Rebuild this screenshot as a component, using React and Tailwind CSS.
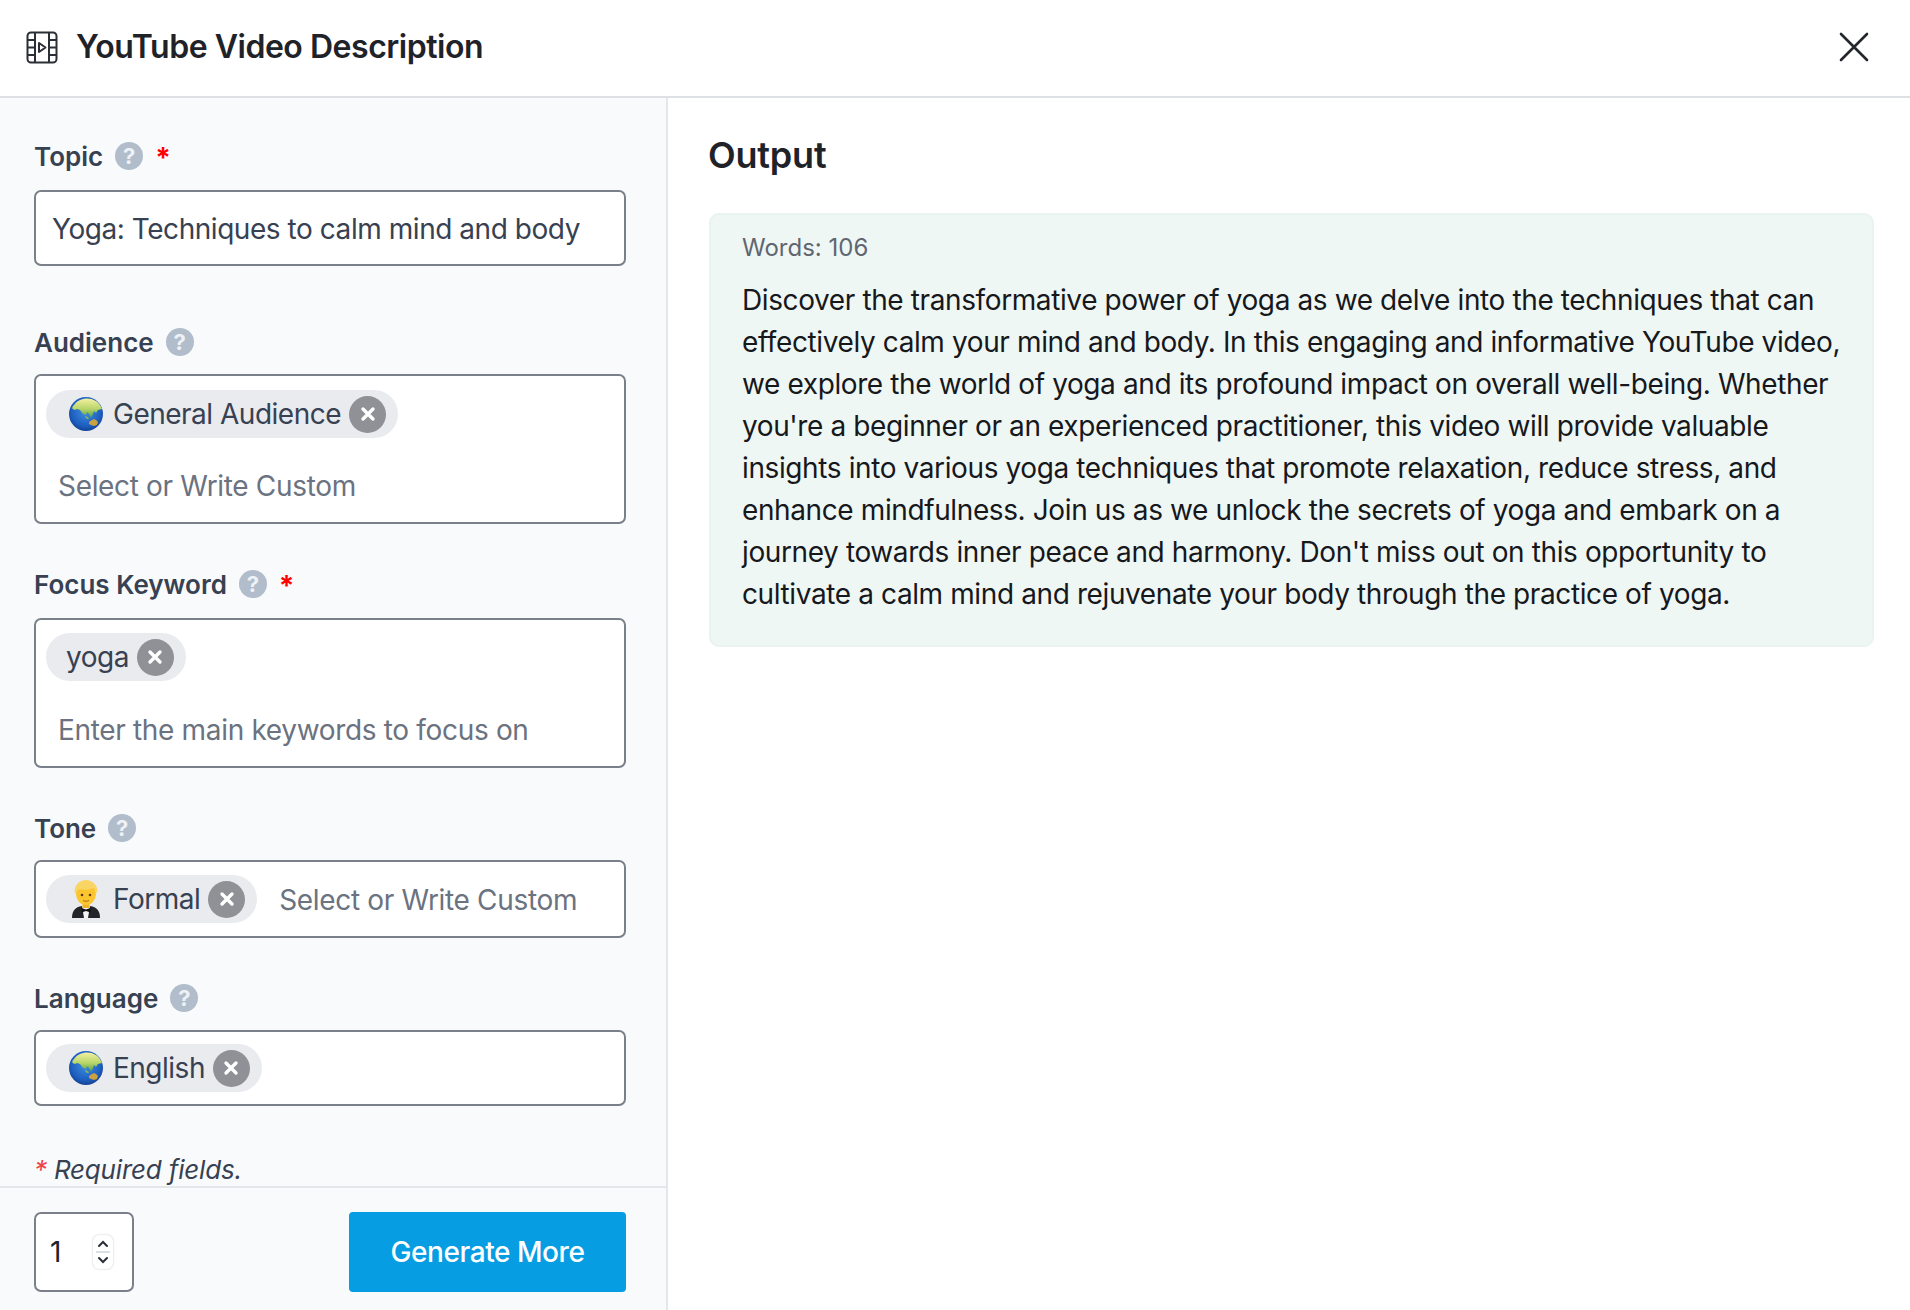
import { Fragment } from 'react';

const GLOBE_ID = { sea: 'globe-sea', land: 'globe-land' };

function Globe() {
  return (
    <svg width="36" height="36" viewBox="0 0 36 36" className="shrink-0">
      <defs>
        <radialGradient id={GLOBE_ID.sea} cx="0.5" cy="0.42" r="0.62">
          <stop offset="0" stopColor="#3f8ee0" />
          <stop offset="0.7" stopColor="#1d5fc0" />
          <stop offset="1" stopColor="#123a88" />
        </radialGradient>
        <linearGradient id={GLOBE_ID.land} x1="0" y1="0" x2="0" y2="1">
          <stop offset="0" stopColor="#f5f0a0" />
          <stop offset="0.55" stopColor="#b5d468" />
          <stop offset="1" stopColor="#4f9a45" />
        </linearGradient>
      </defs>
      <circle cx="18" cy="18" r="17" fill={`url(#${GLOBE_ID.sea})`} />
      <path d="M6 9C10 3 20 0 28 5c3 2 5 5 6 8l-4 1-2 3-2-2-1 3-2 4-2-4-2-2-1 3-3-1-3-4-3-1-2 1C3 13 4 11 6 9z" fill={`url(#${GLOBE_ID.land})`} />
      <path d="M21 26l3-2 2-1 2 1 2 2-1 3-3 1-3-1-2-1z" fill="#c9a23f" />
      <path d="M17 20l3 1 1 2-2 0-2-2z" fill="#7fb658" />
    </svg>
  );
}

function Butler() {
  return (
    <svg width="36" height="40" viewBox="0 0 36 40" className="shrink-0">
      <path d="M4 39c0-7 3-11 10-12h8c7 1 10 5 10 12z" fill="#23252b" />
      <path d="M14 27h8l-2 12h-4z" fill="#f4f4f4" />
      <path d="M13.5 29l4.5 1.5 4.5-1.5v4.5l-4.5-1.5-4.5 1.5z" fill="#111" />
      <rect x="14.5" y="22" width="7" height="7" fill="#f0b429" />
      <ellipse cx="18" cy="15" rx="10" ry="11" fill="#fbc52f" />
      <path d="M7 15C5 6 12 1 18 1s13 5 11 14c-1-3-2-5-4-6-3 2-10 2-14 1-1 1-3 3-4 5z" fill="#f9d565" />
      <circle cx="14" cy="16" r="1.3" fill="#5b3a12" />
      <circle cx="22" cy="16" r="1.3" fill="#5b3a12" />
      <path d="M15 21.5c2 1 4 1 6 0" stroke="#a5651a" strokeWidth="1" fill="none" />
    </svg>
  );
}

function HelpDot() {
  return (
    <span className="flex h-[28px] w-[28px] items-center justify-center rounded-full bg-[#b1bdcb] text-[22px] font-bold leading-none text-[#eef1f5]">
      ?
    </span>
  );
}

function Label({ text, required }) {
  return (
    <div className="flex h-[36px] items-center">
      <span className="text-[26px] font-semibold text-[#374151]">{text}</span>
      <span className="ml-[12px]"><HelpDot /></span>
      {required && <span className="ml-[12px] mt-[4px] text-[28px] font-bold leading-none text-[#ff0000]">*</span>}
    </div>
  );
}

function Chip({ icon, label }) {
  return (
    <span className="inline-flex h-[48px] shrink-0 items-center rounded-full bg-[#e9ebef] pl-[20px] pr-[12px]">
      {icon && <span className="mr-[9px] ml-[2px]">{icon}</span>}
      <span className="text-[28px] leading-none tracking-[-0.5px] text-[#374151]">{label}</span>
      <span className="ml-[8px] flex h-[37px] w-[37px] items-center justify-center rounded-full bg-[#8f9196]">
        <svg width="18" height="18" viewBox="0 0 18 18">
          <path d="M4 4l10 10M14 4L4 14" stroke="#fff" strokeWidth="3.4" strokeLinecap="round" />
        </svg>
      </span>
    </span>
  );
}

const boxClass = 'w-[592px] rounded-[7px] border-2 border-[#7a808a] bg-white';

export default function App() {
  const lines = [
    'Discover the transformative power of yoga as we delve into the techniques that can',
    'effectively calm your mind and body. In this engaging and informative YouTube video,',
    'we explore the world of yoga and its profound impact on overall well-being. Whether',
    "you're a beginner or an experienced practitioner, this video will provide valuable",
    'insights into various yoga techniques that promote relaxation, reduce stress, and',
    'enhance mindfulness. Join us as we unlock the secrets of yoga and embark on a',
    "journey towards inner peace and harmony. Don't miss out on this opportunity to",
    'cultivate a calm mind and rejuvenate your body through the practice of yoga.',
  ];

  return (
    <div className="flex h-[1310px] w-[1910px] flex-col overflow-hidden bg-white font-['Inter',sans-serif] text-[#1f2329]">
      <header className="flex h-[98px] shrink-0 items-center border-b-2 border-[#dde1e6] pb-[2px] pl-[26px] pr-[41px]">
        <svg width="32" height="33" viewBox="0 0 32 33" fill="none" stroke="#2b2f36" strokeWidth="2" className="shrink-0">
          <rect x="1.5" y="1.5" width="29" height="30" rx="3.5" />
          <path d="M9 1.5v30M23 1.5v30M1.5 9H9M1.5 16.5H9M1.5 24H9M23 9h7.5M23 16.5h7.5M23 24h7.5" />
          <path d="M13 12l6.5 4.5L13 21z" strokeLinejoin="round" />
        </svg>
        <h1 className="ml-[18px] text-[32px] font-semibold tracking-[-0.47px] text-[#1f2329]">YouTube Video Description</h1>
        <svg width="30" height="30" viewBox="0 0 30 30" className="ml-auto">
          <path d="M2 2l26 26M28 2L2 28" stroke="#23262b" strokeWidth="2.6" strokeLinecap="round" />
        </svg>
      </header>

      <div className="flex min-h-0 flex-1">
        <aside className="flex w-[668px] shrink-0 flex-col border-r-2 border-[#e3e7ec] bg-[#f8fafc]">
          <div className="min-h-0 flex-1 overflow-hidden px-[34px] pt-[40px]">
            <Label text="Topic" required />
            <input
              readOnly
              value="Yoga: Techniques to calm mind and body"
              className={`${boxClass} mt-[16px] block h-[76px] px-[16px] pt-[2px] text-[28px] tracking-[-0.45px] text-[#374151] outline-none`}
            />

            <div className="mt-[58px]"><Label text="Audience" /></div>
            <div className={`${boxClass} mt-[14px] h-[150px] pl-[10px] pt-[14px]`}>
              <Chip icon={<Globe />} label="General Audience" />
              <input readOnly placeholder="Select or Write Custom" className="mt-[27px] block w-[540px] pl-[12px] text-[28px] tracking-[-0.33px] outline-none placeholder:text-[#6b7280]" />
            </div>

            <div className="mt-[42px]"><Label text="Focus Keyword" required /></div>
            <div className={`${boxClass} mt-[16px] h-[150px] pl-[10px] pt-[13px]`}>
              <Chip label="yoga" />
              <input readOnly placeholder="Enter the main keywords to focus on" className="mt-[28px] block w-[540px] pl-[12px] text-[28px] tracking-[-0.33px] outline-none placeholder:text-[#6b7280]" />
            </div>

            <div className="mt-[42px]"><Label text="Tone" /></div>
            <div className={`${boxClass} mt-[14px] flex h-[78px] items-center pl-[10px]`}>
              <Chip icon={<Butler />} label="Formal" />
              <input readOnly placeholder="Select or Write Custom" className="ml-[22px] mt-[2px] w-[320px] text-[28px] tracking-[-0.33px] outline-none placeholder:text-[#6b7280]" />
            </div>

            <div className="mt-[42px]"><Label text="Language" /></div>
            <div className={`${boxClass} mt-[14px] flex h-[76px] items-center pl-[10px]`}>
              <Chip icon={<Globe />} label="English" />
            </div>

            <p className="mt-[46px] text-[26px] italic leading-[36px] tracking-[-0.2px] text-[#374151]">
              <span className="text-[#ef4444]">*</span> Required fields.
            </p>
          </div>

          <div className="flex h-[124px] shrink-0 items-start justify-between border-t-2 border-[#e3e6ea] pl-[34px] pr-[40px] pt-[24px]">
            <div className="flex h-[80px] w-[100px] items-center rounded-[7px] border-2 border-[#7a808a] bg-white pl-[14px]">
              <span className="text-[28px] text-[#1f2329]">1</span>
              <span className="ml-[32px] flex h-[34px] w-[20px] flex-col items-center justify-center rounded-[6px] bg-white shadow-[0_0_2px_rgba(0,0,0,0.25)]">
                <svg width="14" height="34" viewBox="0 0 14 34" fill="none" stroke="#2b2f36" strokeWidth="2" strokeLinecap="round">
                  <path d="M3 11l4-4 4 4M3 23l4 4 4-4" />
                  <path d="M0 17h14" stroke="#dcdfe3" />
                </svg>
              </span>
            </div>
            <button className="h-[80px] w-[277px] rounded-[4px] bg-[#069de3] text-[28px] font-medium tracking-[-0.45px] text-white">
              Generate More
            </button>
          </div>
        </aside>

        <main className="min-w-0 flex-1 pl-[41px] pr-[36px] pt-[32px]">
          <h2 className="-ml-[1px] text-[36px] font-semibold leading-[50px] tracking-[-0.2px] text-[#1f2329]">Output</h2>
          <section className="mt-[33px] h-[434px] rounded-[10px] border-2 border-[#e9f3f0] bg-[#eff7f5] pl-[31px] pr-[20px] pt-[16px]">
            <div className="text-[24px] leading-[34px] text-[#5f6670]">Words: 106</div>
            <p className="mt-[14px] whitespace-nowrap text-[28px] leading-[42px] tracking-[-0.39px] text-[#16181c]">
              {lines.map((line, i) => (
                <Fragment key={i}>{line}<br /></Fragment>
              ))}
            </p>
          </section>
        </main>
      </div>
    </div>
  );
}
